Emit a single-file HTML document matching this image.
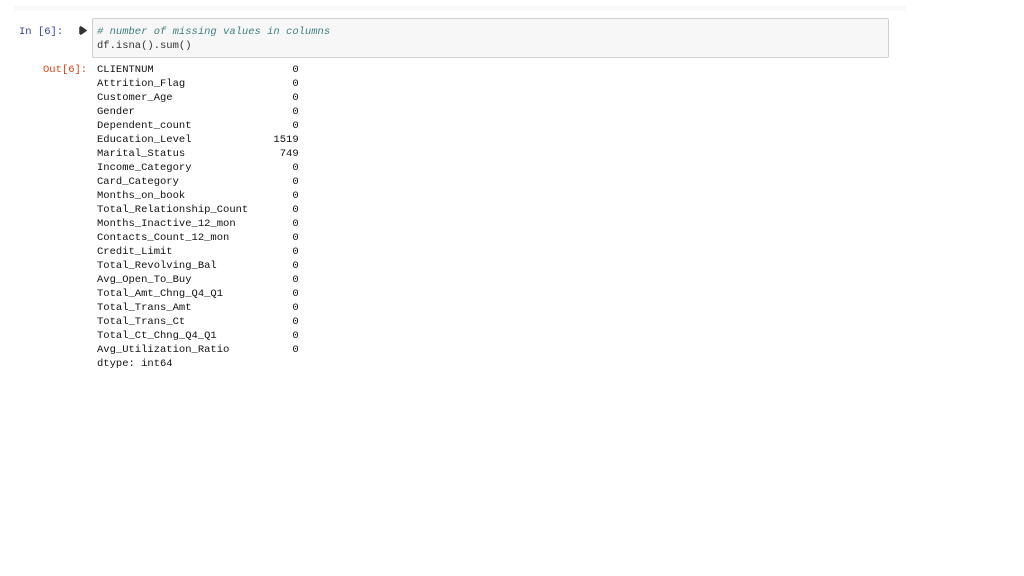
<!DOCTYPE html><html><head><style>
body{margin:0;width:1024px;height:576px;background:#fff;position:relative;font-family:"Liberation Mono",monospace;font-size:10.5px;}
.topbar{position:absolute;left:14px;top:6px;width:892px;height:5px;background:#f9f9f9;}
.p{position:absolute;font-size:10.5px;line-height:14px;}
pre{margin:0;font-family:"Liberation Mono",monospace;font-size:10.5px;line-height:14px;}
.box{position:absolute;left:92px;top:18px;width:795px;height:38px;background:#f7f7f7;border:1px solid #cfcfcf;border-radius:2px;}
</style></head><body>
<div class="topbar"></div>
<div class="p" style="left:19px;top:25px;color:#303f9f">In&nbsp;[6]:</div>
<svg style="position:absolute;left:79px;top:26px" width="9" height="9"><path d="M1 1v7M2 1l5 3.5L2 8z" stroke="#333" fill="#333" stroke-width="1.5"/></svg>
<div class="box"></div>
<pre class="p" style="left:97px;top:25px;color:#333"><i style="color:#408080">#&nbsp;number of missing values in columns</i>
df.isna().sum()</pre>
<div class="p" style="left:43px;top:63px;color:#d84315">Out[6]:</div>
<pre class="p" style="left:97px;top:63px;color:#111">CLIENTNUM                      0
Attrition_Flag                 0
Customer_Age                   0
Gender                         0
Dependent_count                0
Education_Level             1519
Marital_Status               749
Income_Category                0
Card_Category                  0
Months_on_book                 0
Total_Relationship_Count       0
Months_Inactive_12_mon         0
Contacts_Count_12_mon          0
Credit_Limit                   0
Total_Revolving_Bal            0
Avg_Open_To_Buy                0
Total_Amt_Chng_Q4_Q1           0
Total_Trans_Amt                0
Total_Trans_Ct                 0
Total_Ct_Chng_Q4_Q1            0
Avg_Utilization_Ratio          0
dtype: int64</pre>
</body></html>
